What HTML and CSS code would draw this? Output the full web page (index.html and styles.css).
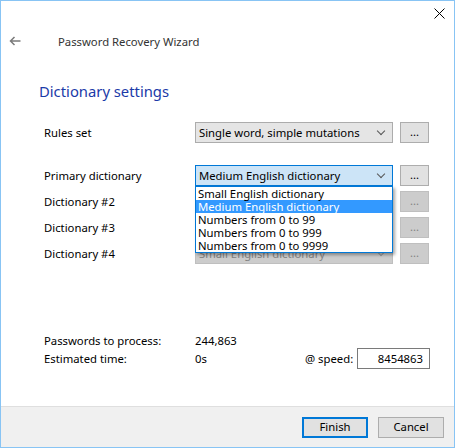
FILE: index.html
```html
<!DOCTYPE html>
<html>
<head>
<meta charset="utf-8">
<link rel="stylesheet" href="styles.css">
</head>
<body>
<div class="window">
  <div class="titlebar">
    <span class="close">
      <svg width="11" height="11" viewBox="0 0 11 11"><path d="M0.5 0.5 L10.5 10.5 M10.5 0.5 L0.5 10.5" stroke="#000" stroke-width="1" fill="none"/></svg>
    </span>
  </div>
  <div class="header">
    <span class="back">
      <svg width="12" height="10" viewBox="0 0 12 10"><path d="M11.5 5 H1.5 M5.5 1 L1.5 5 L5.5 9" stroke="#7a7a7a" stroke-width="1.5" fill="none"/></svg>
    </span>
    <span class="title">Password Recovery Wizard</span>
  </div>
  <div class="content">
    <div class="heading">Dictionary settings</div>
    <div class="row rules">
      <span class="label">Rules set</span>
      <div class="combo"><span class="ctext">Single word, simple mutations</span><span class="chev"></span></div>
      <div class="btn">...</div>
    </div>
    <div class="dicts">
      <div class="row">
        <span class="label">Primary dictionary</span>
        <div class="combo focus">
          <span class="ctext">Medium English dictionary</span><span class="chev"></span>
          <div class="list">
            <div class="item">Small English dictionary</div>
            <div class="item sel">Medium English dictionary</div>
            <div class="item">Numbers from 0 to 99</div>
            <div class="item">Numbers from 0 to 999</div>
            <div class="item">Numbers from 0 to 9999</div>
          </div>
        </div>
        <div class="btn">...</div>
      </div>
      <div class="row">
        <span class="label">Dictionary #2</span>
        <div class="combo disabled"><span class="ctext"></span><span class="chev"></span></div>
        <div class="btn disabled">...</div>
      </div>
      <div class="row">
        <span class="label">Dictionary #3</span>
        <div class="combo disabled"><span class="ctext"></span><span class="chev"></span></div>
        <div class="btn disabled">...</div>
      </div>
      <div class="row">
        <span class="label">Dictionary #4</span>
        <div class="combo disabled"><span class="ctext">Small English dictionary</span><span class="chev"></span></div>
        <div class="btn disabled">...</div>
      </div>
    </div>
    <div class="stats">
      <span class="slabel r1">Passwords to process:</span>
      <span class="sval r1">244,863</span>
      <span class="r1"></span>
      <span class="r1"></span>
      <span class="slabel">Estimated time:</span>
      <span class="sval">0s</span>
      <span class="speed">@ speed:</span>
      <div class="input">8454863</div>
    </div>
  </div>
  <div class="footer">
    <div class="fbtn default">Finish</div>
    <div class="fbtn">Cancel</div>
  </div>
</div>
</body>
</html>
```
FILE: styles.css
```css
* { box-sizing: border-box; }
html, body { margin: 0; padding: 0; background: #fff; }
body { font-family: "Noto Sans", "Open Sans", sans-serif; font-size: 11.3px; color: #000; }

.window {
  width: 455px; height: 448px;
  border: 1px solid #88c4f4;
  display: flex; flex-direction: column;
  background: #fff;
}
.titlebar { height: 26px; display: flex; justify-content: flex-end; align-items: flex-start; }
.close { width: 11px; height: 11px; margin-top: 7px; margin-right: 9px; display: block; }
.close svg { display: block; }
.header { height: 28px; display: flex; align-items: center; }
.back { width: 12px; height: 10px; margin-left: 8px; display: block; }
.back svg { display: block; }
.title { margin-left: 37px; color: #333; }

.content { flex: 1; padding-left: 43px; }
.heading { margin-top: 25px; margin-left: -5px; font-size: 14.8px; line-height: 22px; color: #1b3aa8; }

.row { display: flex; align-items: center; height: 21px; }
.rules { margin-top: 20px; }
.dicts { margin-top: 22px; display: flex; flex-direction: column; gap: 5px; }
.label { width: 151px; line-height: 16px; }

.combo {
  position: relative;
  width: 198px; height: 21px;
  background: #e5e5e5; border: 1px solid #acacac;
  display: flex; align-items: center; padding-left: 3px;
}
.combo .ctext { flex: 1; line-height: 16px; white-space: nowrap; overflow: hidden; }
.chev {
  width: 6px; height: 6px; margin-right: 8px; margin-top: -4px;
  border-right: 1px solid #555; border-bottom: 1px solid #555;
  transform: rotate(45deg);
}
.combo.focus { background: #cce4f7; border-color: #0078d7; z-index: 2; }
.combo.disabled { background: #cccccc; border-color: #bfbfbf; color: #838383; }
.combo.disabled .chev { border-color: #9a9a9a; }

.btn {
  width: 29px; height: 21px; margin-left: 7px;
  background: #e1e1e1; border: 1px solid #adadad;
  display: flex; align-items: center; justify-content: center;
  line-height: 16px; padding-bottom: 1px;
}
.btn.disabled { background: #cccccc; border-color: #bfbfbf; color: #838383; }

.list {
  position: absolute; left: -1px; top: 20px;
  width: 198px;
  background: #fff; border: 1px solid #0078d7;
  box-shadow: 2px 2px 3px rgba(0,0,0,0.35);
  z-index: 3;
}
.item { height: 13px; line-height: 13px; padding-left: 2px; white-space: nowrap; }
.item.sel { background: #3399ff; color: #fff; }

.stats {
  margin-top: 70px;
  display: grid;
  grid-template-columns: 151px 110px 52px 73px;
  grid-template-rows: 14px 21px;
  align-items: center;
}
.stats span { line-height: 14px; white-space: nowrap; }
.speed { text-align: right; padding-right: 8px; }
.input {
  height: 21px; border: 1px solid #7a7a7a; background: #fff;
  text-align: right; padding-right: 6px; line-height: 19px;
}

.footer {
  height: 41px;
  border-top: 1px solid #dfdfdf;
  background: #f0f0f0;
  display: flex; justify-content: flex-end; align-items: flex-start;
  padding-top: 10px; padding-right: 10px; gap: 10px;
}
.fbtn {
  width: 66px; height: 21px;
  background: #e1e1e1; border: 1px solid #adadad;
  display: flex; align-items: center; justify-content: center;
  line-height: 16px; padding-bottom: 1px;
}
.fbtn.default { border: 2px solid #0078d7; }
```
